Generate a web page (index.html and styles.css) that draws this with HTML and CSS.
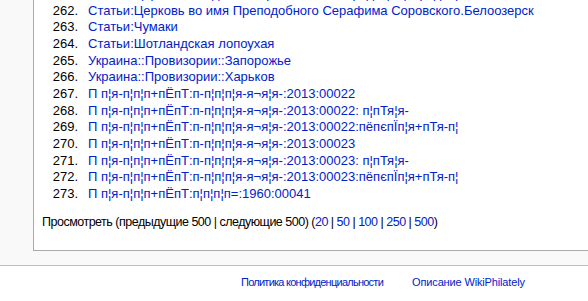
FILE: index.html
```html
<!DOCTYPE html>
<html lang="ru">
  <head>
    <meta charset="UTF-8" />
    <meta name="viewport" content="width=device-width, initial-scale=1.0" />
    <title>Служебная страница — WikiPhilately</title>
    <link rel="stylesheet" href="styles.css">
  </head>

  <body>
    <div class="page">
      <div class="content">
        <ol class="results" start="261">
          <li><a href="#">Статьи:Церковь Рождества Пресвятой Богородицы (Городня)</a></li>
          <li><a href="#">Статьи:Церковь во имя Преподобного Серафима Соровского.Белоозерск</a></li>
          <li><a href="#">Статьи:Чумаки</a></li>
          <li><a href="#">Статьи:Шотландская лопоухая</a></li>
          <li><a href="#">Украина::Провизории::Запорожье</a></li>
          <li><a href="#">Украина::Провизории::Харьков</a></li>
          <li><a href="#">П п¦я-п¦п¦п+пЁпТ:п-п¦п¦п¦я-я¬я¦я-:2013:00022</a></li>
          <li><a href="#">П п¦я-п¦п¦п+пЁпТ:п-п¦п¦п¦я-я¬я¦я-:2013:00022: п¦пТя¦я-</a></li>
          <li><a href="#">П п¦я-п¦п¦п+пЁпТ:п-п¦п¦п¦я-я¬я¦я-:2013:00022:пёпєпЇп¦я+пТя-п¦</a></li>
          <li><a href="#">П п¦я-п¦п¦п+пЁпТ:п-п¦п¦п¦я-я¬я¦я-:2013:00023</a></li>
          <li><a href="#">П п¦я-п¦п¦п+пЁпТ:п-п¦п¦п¦я-я¬я¦я-:2013:00023: п¦пТя¦я-</a></li>
          <li><a href="#">П п¦я-п¦п¦п+пЁпТ:п-п¦п¦п¦я-я¬я¦я-:2013:00023:пёпєпЇп¦я+пТя-п¦</a></li>
          <li><a href="#">П п¦я-п¦п¦п+пЁпТ:п¦п¦п¦п=:1960:00041</a></li>
        </ol>

        <p class="pager">
          Просмотреть (предыдущие 500 | следующие 500)
          (<a href="#">20</a> | <a href="#">50</a> | <a href="#">100</a> | <a href="#">250</a> | <a href="#">500</a>)
        </p>
      </div>
    </div>

    <div class="footer">
      <a href="#" class="privacy">Политика конфиденциальности</a>
      <a href="#" class="about">Описание WikiPhilately</a>
    </div>
  </body>
</html>
```

FILE: styles.css
```css
body {
  margin: 0;
  padding: 0;
  font-family: "Liberation Sans", Arial, sans-serif;
  background-color: #f9f9f9;
  color: #000;
}

a {
  color: #0022cc;
  text-decoration: none;
}

.page {
  padding-left: 33px;
  padding-bottom: 14px;
}

.content {
  background-color: #fff;
  border: 1px solid #aaa;
  border-top: 0;
  border-right: 0;
  padding: 0 8px 20px 8px;
  margin-top: -14px;
  font-size: 13px;
  line-height: 16.65px;
}

.results {
  list-style: none;
  counter-reset: item 260;
  margin: 0;
  padding: 0;
}

.results li {
  counter-increment: item;
}

.results li::before {
  content: counter(item) ".";
  display: inline-block;
  width: 36px;
  margin-right: 10px;
  text-align: right;
}

.pager {
  margin: 11px 0 0 0;
  font-size: 12.5px;
  letter-spacing: -0.5px;
}

.footer {
  background-color: #fff;
  border-top: 1px solid #fabd23;
  padding: 9px 0 12px 241px;
  font-size: 11px;
  line-height: 14px;
  height: 14px;
}

.footer a {
  margin-right: 26px;
}

.footer .privacy {
  letter-spacing: -0.75px;
}

.footer .about {
  letter-spacing: -0.15px;
}
```
